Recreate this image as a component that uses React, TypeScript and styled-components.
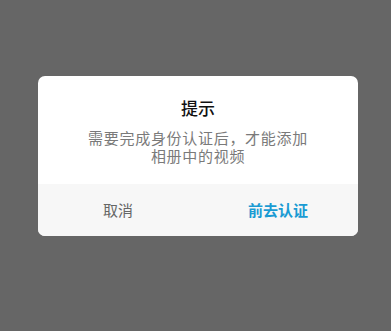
import styled, { createGlobalStyle } from "styled-components";

const GlobalStyle = createGlobalStyle`
  html, body {
    margin: 0;
    padding: 0;
    background: #666666;
  }
  body {
    font-family: "Noto Sans CJK SC", "Noto Sans", sans-serif;
  }
`;

const Overlay = styled.div`
  width: 391px;
  height: 331px;
  box-sizing: border-box;
  padding: 76px 0 0 38px;
  background: #666666;
`;

const Dialog = styled.div`
  width: 320px;
  height: 160px;
  background: #ffffff;
  border-radius: 7px;
  overflow: hidden;
  display: flex;
  flex-direction: column;
`;

const Content = styled.div`
  height: 108px;
  box-sizing: border-box;
  padding-top: 20px;
  text-align: center;
`;

const Title = styled.h2`
  margin: 0;
  font-size: 17px;
  line-height: 24px;
  font-weight: 500;
  color: #111111;
`;

const Message = styled.p`
  margin: 9px 0 0;
  font-size: 15px;
  line-height: 18px;
  letter-spacing: 0.7px;
  color: #7a7a7a;
  white-space: nowrap;
`;

const Footer = styled.div`
  flex: 1;
  display: flex;
  background: #f7f7f7;
`;

const Action = styled.button<{ $primary?: boolean }>`
  flex: 1;
  border: none;
  background: transparent;
  padding: 0 0 2px;
  font-family: inherit;
  font-size: 15px;
  font-weight: ${(p) => (p.$primary ? 700 : 400)};
  color: ${(p) => (p.$primary ? "#1a9bd3" : "#666666")};
`;

export default function App() {
  return (
    <>
      <GlobalStyle />
      <Overlay>
        <Dialog>
          <Content>
            <Title>提示</Title>
            <Message>
              需要完成身份认证后，才能添加
              <br />
              相册中的视频
            </Message>
          </Content>
          <Footer>
            <Action>取消</Action>
            <Action $primary>前去认证</Action>
          </Footer>
        </Dialog>
      </Overlay>
    </>
  );
}
